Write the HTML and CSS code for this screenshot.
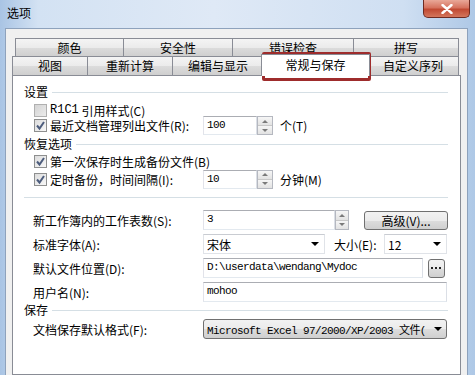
FILE: index.html
```html
<!DOCTYPE html>
<html lang="zh-CN">
<head>
  <meta charset="UTF-8">
  <title>选项</title>
  <link rel="stylesheet" href="styles.css">
</head>
<body>

  <div class="window">
    <div class="titlebar">
      <span class="title">选项</span>
      <span class="close">
        <svg width="12" height="10" viewBox="0 0 12 10"><path d="M1.5 1 L10.5 9 M10.5 1 L1.5 9" stroke="#fff" stroke-width="2.4" stroke-linecap="round"/></svg>
      </span>
    </div>

    <div class="dialog">
      <div class="tab-row row-back">
        <div class="tab">颜色</div>
        <div class="tab">安全性</div>
        <div class="tab">错误检查</div>
        <div class="tab">拼写</div>
      </div>
      <div class="tab-row row-front">
        <div class="tab">视图</div>
        <div class="tab">重新计算</div>
        <div class="tab">编辑与显示</div>
        <div class="tab active">常规与保存</div>
        <div class="tab">自定义序列</div>
      </div>

      <div class="panel">
        <div class="group g-settings">设置</div>
        <div class="check-row r-r1c1">
          <span class="cb off"></span>
          <span class="mono-label">R1C1</span>&nbsp;引用样式(C)
        </div>
        <div class="check-row r-recent">
          <span class="cb on"><svg width="11" height="11" viewBox="0 0 11 11"><path d="M2 5.5 L4.5 8.5 L9 2" fill="none" stroke="#4d5d7d" stroke-width="2"/></svg></span>
          <span class="check-label">最近文档管理列出文件(R):</span>
          <span class="input short">100</span><span class="spin"><i class="up"></i><i class="down"></i></span>
          <span class="unit">个(T)</span>
        </div>

        <div class="group g-recover">恢复选项</div>
        <div class="check-row r-backup">
          <span class="cb on"><svg width="11" height="11" viewBox="0 0 11 11"><path d="M2 5.5 L4.5 8.5 L9 2" fill="none" stroke="#4d5d7d" stroke-width="2"/></svg></span>
          第一次保存时生成备份文件(B)
        </div>
        <div class="check-row r-timer">
          <span class="cb on"><svg width="11" height="11" viewBox="0 0 11 11"><path d="M2 5.5 L4.5 8.5 L9 2" fill="none" stroke="#4d5d7d" stroke-width="2"/></svg></span>
          <span class="check-label">定时备份，时间间隔(I):</span>
          <span class="input short">10</span><span class="spin"><i class="up"></i><i class="down"></i></span>
          <span class="unit">分钟(M)</span>
        </div>

        <div class="separator"></div>

        <div class="form-row r-sheets">
          <span class="field-label">新工作簿内的工作表数(S):</span>
          <span class="input sheets">3</span><span class="spin narrow"><i class="up"></i><i class="down"></i></span>
          <span class="button advanced">高级(V)...</span>
        </div>
        <div class="form-row r-font">
          <span class="field-label">标准字体(A):</span>
          <span class="combo font"><span>宋体</span><i class="arrow"></i></span>
          <span class="size-label">大小(E):</span>
          <span class="combo size"><span>12</span><i class="arrow"></i></span>
        </div>
        <div class="form-row r-path">
          <span class="field-label">默认文件位置(D):</span>
          <span class="input path">D:\userdata\wendang\Mydoc</span>
          <span class="button browse">
            <svg width="11" height="3" viewBox="0 0 11 3"><rect x="0" y="0" width="2" height="2" fill="#222"/><rect x="4" y="0" width="2" height="2" fill="#222"/><rect x="8" y="0" width="2" height="2" fill="#222"/></svg>
          </span>
        </div>
        <div class="form-row r-user">
          <span class="field-label">用户名(N):</span>
          <span class="input wide">mohoo</span>
        </div>

        <div class="group g-save">保存</div>
        <div class="form-row r-format">
          <span class="field-label">文档保存默认格式(F):</span>
          <span class="combo format"><span>Microsoft Excel 97/2000/XP/2003 文件(</span><i class="arrow"></i></span>
        </div>
      </div>
    </div>

    <div class="highlight"></div>
  </div>

</body>
</html>
```

FILE: styles.css
```css
body {
  margin: 0;
  font-family: "Noto Sans CJK SC", "Noto Sans", sans-serif;
  font-size: 12px;
  color: #000;
}
.window {
  position: relative;
  width: 475px;
  height: 375px;
  overflow: hidden;
  background: linear-gradient(to right, #a9c4e4, #d3e2f3 8%, #dfe9f6 45%, #cfdff2 85%, #aec8e6);
}
.titlebar {
  height: 28px;
  display: flex;
  align-items: flex-start;
}
.title {
  padding: 5px 0 0 7px;
  line-height: 16px;
  font-size: 12px;
}
.close {
  margin-left: auto;
  margin-right: 5px;
  width: 47px;
  height: 18px;
  box-sizing: border-box;
  border: 1px solid #6e2b22;
  border-top: none;
  border-radius: 0 0 5px 5px;
  background: linear-gradient(#e9a898, #d6735f 45%, #c14a33 55%, #d4765c);
  display: flex;
  align-items: center;
  justify-content: center;
}
.dialog {
  margin-left: 5px;
  width: 463px;
  height: 347px;
  box-sizing: border-box;
  border: 1px solid #8ea2bc;
  border-bottom: none;
  background: #f0f0f0;
  padding: 9px 6px 0 6px;
}
.tab-row {
  display: flex;
}
.row-back {
  margin-left: 3px;
  height: 18px;
}
.row-front {
  height: 19px;
}
.tab {
  box-sizing: border-box;
  border: 1px solid #898c95;
  border-bottom: none;
  background: linear-gradient(#f4f4f4, #ebebeb 50%, #dcdcdc 50%, #cfcfcf);
  text-align: center;
  line-height: 17px;
  white-space: nowrap;
}
.tab + .tab {
  margin-left: -1px;
}
.row-back .tab:nth-child(1) { width: 109px; }
.row-back .tab:nth-child(2) { width: 110px; }
.row-back .tab:nth-child(3) { width: 122px; }
.row-back .tab:nth-child(4) { width: 106px; }
.row-front .tab:nth-child(1) { width: 76px; }
.row-front .tab:nth-child(2) { width: 86px; }
.row-front .tab:nth-child(3) { width: 92px; }
.row-front .tab:nth-child(5) { width: 92px; }
.row-front .tab.active {
  position: relative;
  z-index: 1;
  width: 109px;
  height: 22px;
  margin: -2px -2px -1px -3px;
  background: #fff;
  line-height: 19px;
}
.panel {
  box-sizing: border-box;
  height: 300px;
  border: 1px solid #898c95;
  background: #fff;
  padding: 0 12px 0 11px;
}
.group {
  display: flex;
  align-items: center;
  height: 16px;
  line-height: 16px;
}
.group::after {
  content: "";
  flex: 1;
  border-top: 1px solid #d5dfe5;
  margin-left: 4px;
}
.g-settings { margin-top: 8px; }
.g-recover { margin-top: 2px; }
.g-save { margin-top: 1px; height: 14px; }
.check-row {
  display: flex;
  align-items: center;
  margin-left: 10px;
  white-space: nowrap;
}
.r-r1c1 { height: 14px; margin-top: 3px; }
.r-recent { height: 17px; }
.r-backup { height: 15px; margin-top: 2px; }
.r-timer { height: 18px; margin-top: 1px; }
.cb {
  box-sizing: border-box;
  width: 13px;
  height: 13px;
  margin-right: 3px;
  border: 1px solid #8e8f8f;
  background: linear-gradient(135deg, #dcdcdc, #f8f8f8);
  display: flex;
  align-items: center;
  justify-content: center;
  flex: none;
}
.cb.off {
  background: linear-gradient(135deg, #d4d4d4, #ececec);
  border-color: #b0b0b0;
}
.mono-label {
  font-family: "Liberation Mono", monospace;
  font-size: 12px;
}
.check-label {
  width: 153px;
  flex: none;
}
.input {
  box-sizing: border-box;
  height: 19px;
  border: 1px solid #abadb3;
  border-color: #abadb3 #dbdfe6 #e3e9ef #e2e3ea;
  background: #fff;
  padding-left: 3px;
  font-family: "Liberation Mono", "Noto Sans CJK SC", monospace;
  font-size: 11px;
  letter-spacing: -0.6px;
  line-height: 17px;
  flex: none;
}
.input.short { width: 54px; }
.input.sheets { width: 132px; height: 20px; }
.input.path { width: 220px; height: 20px; }
.input.wide { width: 244px; height: 20px; }
.spin {
  box-sizing: border-box;
  width: 16px;
  height: 19px;
  border: 1px solid #b5b8c0;
  background: #f3f3f3;
  display: flex;
  flex-direction: column;
  flex: none;
}
.spin.narrow { width: 14px; height: 20px; }
.spin i {
  flex: 1;
  display: flex;
  align-items: center;
  justify-content: center;
  background: linear-gradient(#f6f6f6, #e2e2e2);
}
.spin i + i {
  border-top: 1px solid #c8c8c8;
}
.spin .up::before {
  content: "";
  border: 3px solid transparent;
  border-top: none;
  border-bottom: 3px solid #7a7a7a;
}
.spin .down::before {
  content: "";
  border: 3px solid transparent;
  border-bottom: none;
  border-top: 3px solid #7a7a7a;
}
.unit {
  margin-left: 7px;
}
.separator {
  margin-top: 9px;
  border-top: 1px solid #d5dfe5;
}
.form-row {
  display: flex;
  align-items: center;
  height: 20px;
  margin-left: 9px;
  white-space: nowrap;
}
.r-sheets { margin-top: 12px; }
.r-font { margin-top: 4px; }
.r-path { margin-top: 4px; }
.r-user { margin-top: 4px; }
.r-format { margin-top: 2px; }
.field-label {
  width: 170px;
  flex: none;
}
.button {
  box-sizing: border-box;
  height: 19px;
  border: 1px solid #707070;
  border-radius: 3px;
  background: linear-gradient(#f2f2f2, #ebebeb 50%, #dddddd 50%, #cfcfcf);
  display: flex;
  align-items: center;
  justify-content: center;
  flex: none;
}
.advanced {
  width: 84px;
  margin-left: 15px;
}
.browse {
  width: 17px;
  height: 19px;
  margin-left: 5px;
}
.combo {
  box-sizing: border-box;
  height: 20px;
  border: 1px solid #e0e3e8;
  border-top-color: #c9ccd2;
  background: #fff;
  display: flex;
  align-items: center;
  padding-left: 3px;
  flex: none;
}
.combo span {
  flex: 1;
  overflow: hidden;
}
.combo .arrow {
  width: 0;
  height: 0;
  border: 4px solid transparent;
  border-bottom: none;
  border-top: 4px solid #000;
  margin: 0 5px 0 4px;
}
.combo.font { width: 122px; }
.combo.size { width: 63px; }
.size-label {
  margin-left: 9px;
  width: 50px;
}
.combo.format {
  width: 244px;
  border: 1px solid #707070;
  border-radius: 3px;
  background: linear-gradient(#f2f2f2, #ebebeb 50%, #dddddd 50%, #cfcfcf);
  font-family: "Liberation Mono", "Noto Sans CJK SC", monospace;
  font-size: 11px;
  letter-spacing: -0.6px;
}
.combo.format .arrow {
  margin-right: 4px;
}
.highlight {
  position: absolute;
  left: 262px;
  top: 52px;
  width: 109px;
  height: 29px;
  box-sizing: border-box;
  border: 3px solid #9e2c2c;
  border-radius: 2px;
}
```
